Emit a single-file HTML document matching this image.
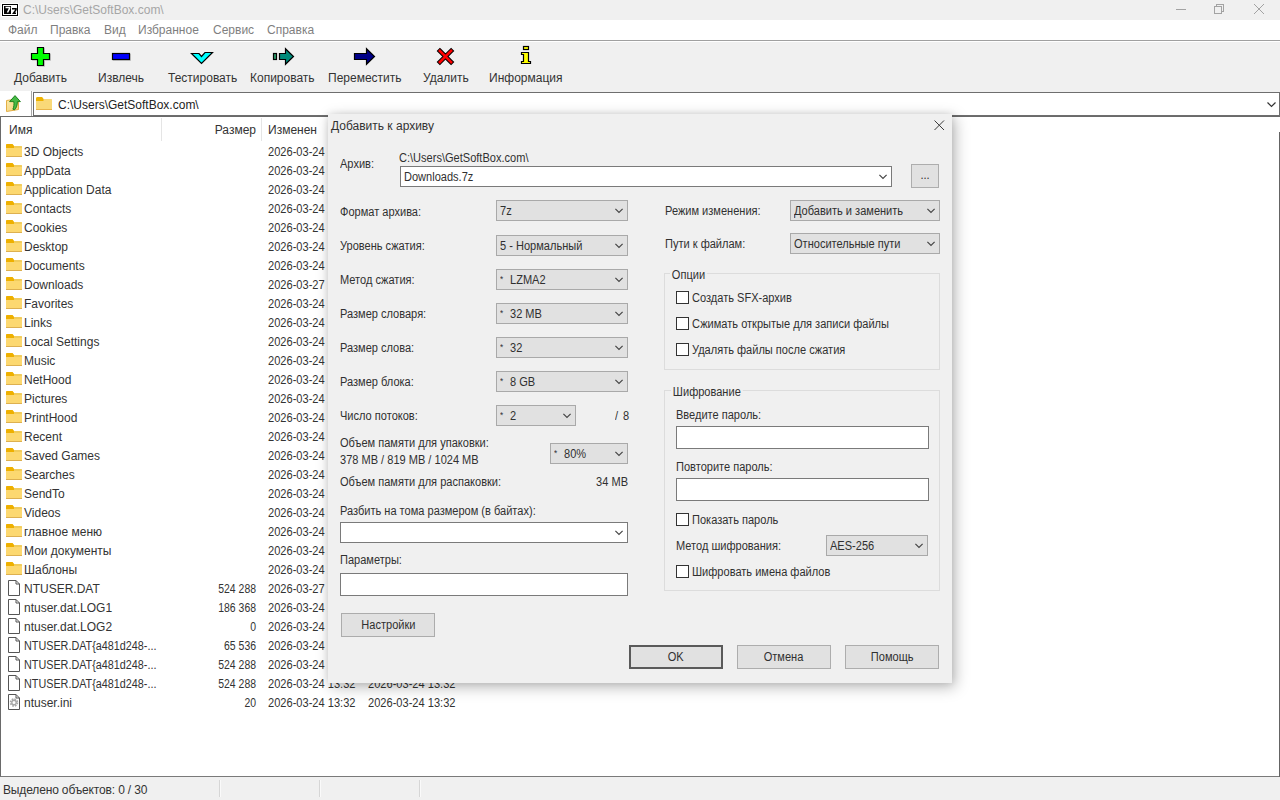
<!DOCTYPE html>
<html><head><meta charset="utf-8">
<style>
*{margin:0;padding:0;box-sizing:border-box}
html,body{width:1280px;height:800px;overflow:hidden;background:#f0f0f0;font-family:"Liberation Sans",sans-serif;font-size:12px;color:#333}
.a{position:absolute}
.t{position:absolute;white-space:nowrap;line-height:14px}
svg{position:absolute;overflow:visible}
.row{position:absolute;left:1px;width:1278px;height:19px}
.nm{position:absolute;left:23px;top:0;line-height:14px;white-space:nowrap}
.sz{position:absolute;left:0;width:255px;text-align:right;top:0;line-height:14px;white-space:nowrap;transform:scaleX(0.87);transform-origin:100% 0}
.d1{position:absolute;left:267px;top:0;line-height:14px;white-space:nowrap;transform:scaleX(0.923);transform-origin:0 0}
.d2{position:absolute;left:367px;top:0;line-height:14px;white-space:nowrap;transform:scaleX(0.923);transform-origin:0 0}
.cb{position:absolute;background:#e1e1e1;border:1px solid #a9a9a9;height:21px}
.cbw{position:absolute;background:#fff;border:1px solid #7a7a7a}
.btn{position:absolute;background:#e1e1e1;border:1px solid #adadad;text-align:center;line-height:22px;height:24px;width:94px;white-space:nowrap;font-size:12px;color:#303030}
.chk{position:absolute;width:13px;height:13px;border:1px solid #333;background:#fff}
.grp{position:absolute;border:1px solid #dcdcdc}
.s{position:absolute;white-space:nowrap;font-size:12px;line-height:14px;color:#303030;transform:scaleX(0.92);transform-origin:0 0}
.btn span{display:inline-block;transform:scaleX(0.92)}
</style></head><body>
<div class="a" style="left:0;top:0;width:1280px;height:20px;background:#f0f0f0"></div>
<div class="a" style="left:1px;top:3px;width:18px;height:14px;background:#fff"></div>
<div class="a" style="left:2px;top:4px;width:16px;height:12px;border:1px solid #000;background:#fff"></div>
<div class="a" style="left:4px;top:6px;width:7px;height:8px;background:#000"></div>
<svg style="left:4px;top:6px" width="7" height="8"><path d="M1.5 1.5H5.5V2.5L3.5 6.5" stroke="#fff" stroke-width="1.5" fill="none"/></svg>
<svg style="left:12px;top:8px" width="4" height="6"><path d="M0 0.7H4V1.8L1.5 5.2H4" stroke="#000" stroke-width="1.5" fill="none"/></svg>
<div class="t" style="left:23px;top:3px;color:#a6a6a6">C:\Users\GetSoftBox.com\</div>
<div class="a" style="left:1176px;top:9px;width:10px;height:1px;background:#a3a3a3"></div>
<div class="a" style="left:1216px;top:4px;width:8px;height:8px;border:1px solid #a3a3a3"></div>
<div class="a" style="left:1214px;top:6px;width:8px;height:8px;border:1px solid #a3a3a3;background:#f0f0f0"></div>
<svg style="left:1254px;top:4px" width="10" height="10"><path d="M0 0L10 10M10 0L0 10" stroke="#a3a3a3" stroke-width="1"/></svg>
<div class="a" style="left:0;top:20px;width:1280px;height:20px;background:#fff"></div>
<div class="t" style="left:8px;top:23px;color:#7f7f7f">Файл</div>
<div class="t" style="left:50px;top:23px;color:#7f7f7f">Правка</div>
<div class="t" style="left:104px;top:23px;color:#7f7f7f">Вид</div>
<div class="t" style="left:138px;top:23px;color:#7f7f7f">Избранное</div>
<div class="t" style="left:213px;top:23px;color:#7f7f7f">Сервис</div>
<div class="t" style="left:267px;top:23px;color:#7f7f7f">Справка</div>
<div class="a" style="left:0;top:40px;width:1280px;height:1px;background:#a0a0a0"></div>
<div class="a" style="left:0;top:41px;width:1280px;height:1px;background:#fff"></div>
<div class="t" style="left:14px;top:71px;color:#333">Добавить</div>
<div class="t" style="left:98px;top:71px;color:#333">Извлечь</div>
<div class="t" style="left:168px;top:71px;color:#333">Тестировать</div>
<div class="t" style="left:250px;top:71px;color:#333">Копировать</div>
<div class="t" style="left:328px;top:71px;color:#333">Переместить</div>
<div class="t" style="left:423px;top:71px;color:#333">Удалить</div>
<div class="t" style="left:489px;top:71px;color:#333">Информация</div>
<svg style="left:31px;top:47px" width="21" height="21"><path d="M7.5 1.5H13.5V7.5H19.5V13.5H13.5V19.5H7.5V13.5H1.5V7.5H7.5Z" fill="none" stroke="#9a9a9a" stroke-opacity="0.45"/><path d="M6.5 0.5H12.5V6.5H18.5V12.5H12.5V18.5H6.5V12.5H0.5V6.5H6.5Z" fill="#00ff00" stroke="#000" stroke-width="1.2"/></svg>
<svg style="left:112px;top:53px" width="20" height="9"><rect x="1.5" y="1.5" width="17" height="6" fill="none" stroke="#9a9a9a" stroke-opacity="0.45"/><rect x="0.5" y="0.5" width="17" height="6" fill="#0000ff" stroke="#000" stroke-width="1.2"/></svg>
<svg style="left:190px;top:51px" width="25" height="15"><path d="M1.5 2.5H9L11.5 5.5L15 1.5H22.5L11.5 12.5Z" fill="#00ffff" stroke="#000" stroke-width="1.2" stroke-linejoin="miter"/></svg>
<svg style="left:273px;top:48px" width="23" height="19"><rect x="0.5" y="5.5" width="3" height="6" fill="#2e9a6a" stroke="#000" stroke-width="1.2"/><path d="M6.5 5.5H12.5V0.7L20.5 8.5L12.5 16.3V11.5H6.5Z" fill="#008a7a" stroke="#000" stroke-width="1.2" stroke-linejoin="miter"/></svg>
<svg style="left:354px;top:48px" width="23" height="19"><path d="M0.5 5.5H12.5V0.7L20.5 8.5L12.5 16.3V11.5H0.5Z" fill="#000088" stroke="#000" stroke-width="1.2" stroke-linejoin="miter"/></svg>
<svg style="left:437px;top:48px" width="18" height="18"><path d="M2.9 2.9L14.1 14.1M14.1 2.9L2.9 14.1" stroke="#000" stroke-width="4.6" stroke-linecap="square"/><path d="M2.9 2.9L14.1 14.1M14.1 2.9L2.9 14.1" stroke="#ff0000" stroke-width="2.6" stroke-linecap="square"/></svg>
<svg style="left:520px;top:45px" width="13" height="21"><rect x="3.5" y="1.5" width="5" height="3" fill="#ffff00" stroke="#000" stroke-width="1.2"/><path d="M1.5 7.5H8.5V16.5H10.5V18.5H1.5V16.5H3.5V9.5H1.5Z" fill="#ffff00" stroke="#000" stroke-width="1.2" stroke-linejoin="miter"/></svg>
<div class="a" style="left:0;top:91px;width:31px;height:25px;background:#fff"></div>
<div class="a" style="left:31px;top:91px;width:1px;height:25px;background:#a8a8a8"></div>
<div class="a" style="left:32px;top:91px;width:1px;height:25px;background:#fff"></div>
<div class="a" style="left:33px;top:92px;width:1247px;height:24px;background:#fff;border:1px solid #6e6e6e"></div>
<svg style="left:5px;top:95px" width="17" height="18"><defs><linearGradient id="fg" x1="0" y1="0" x2="1" y2="1"><stop offset="0" stop-color="#fbe9a6"/><stop offset="1" stop-color="#f3d27a"/></linearGradient></defs><path d="M1.5 5.5L6.5 4.8L13.5 5.2V14.5L1.5 16.5Z" fill="url(#fg)" stroke="#e3ae45" stroke-width="1"/><path d="M4.6 6.6L10 0.6L15.4 6.6H12.4C12.3 10 11.5 12.8 9.6 14.8L7.9 14.2C8.9 11.8 9.2 9.2 8.8 6.6Z" fill="#46b946" stroke="#137a13" stroke-width="0.9" stroke-linejoin="round"/></svg>
<svg style="left:36px;top:97px" width="17" height="14"><path d="M0 1.5Q0 0 1.5 0H6L7.5 2H15.5Q16 2 16 3V12Q16 13 15 13H1Q0 13 0 12Z" fill="#f9d978"/><path d="M0 1.5Q0 0 1.5 0H6L7.5 2V4H0Z" fill="#eeb200"/><rect x="0" y="12" width="16" height="1" fill="#e8b449"/></svg>
<div class="t" style="left:58px;top:98px;color:#222">C:\Users\GetSoftBox.com\</div>
<svg style="left:1267px;top:102px" width="9" height="5"><path d="M0.5 0.5L4.5 4.5L8.5 0.5" stroke="#333" stroke-width="1.2" fill="none"/></svg>
<div class="a" style="left:0;top:116px;width:1280px;height:661px;background:#fff;border-left:1px solid #6a6a6a;border-top:1px solid #6a6a6a;border-bottom:1px solid #7a7a7a"></div>
<div class="a" style="left:1279px;top:132px;width:1px;height:645px;background:#646464"></div>
<div class="t" style="left:9px;top:123px">Имя</div>
<div class="t" style="left:0;width:256px;text-align:right;top:123px">Размер</div>
<div class="t" style="left:268px;top:123px">Изменен</div>
<div class="a" style="left:161px;top:118px;width:1px;height:23px;background:#e5e5e5"></div>
<div class="a" style="left:261px;top:118px;width:1px;height:23px;background:#e5e5e5"></div>
<div class="row" style="top:145px"><svg style="left:5px;top:-1px" width="16" height="13"><path d="M0 1Q0 0 1 0H6.5L8 2H15Q16 2 16 3V12Q16 13 15 13H1Q0 13 0 12Z" fill="#fcd870"/><path d="M8 2H15Q16 2 16 3V4H8Z" fill="#f1cc5c"/><path d="M0 1Q0 0 1 0H6.5L8 2V4H0Z" fill="#eeb000"/><rect x="0" y="12" width="16" height="1" fill="#ddb050"/></svg><div class="nm">3D Objects</div><div class="sz"></div><div class="d1">2026-03-24 13:32</div><div class="d2">2026-03-24 13:32</div></div>
<div class="row" style="top:164px"><svg style="left:5px;top:-1px" width="16" height="13"><path d="M0 1Q0 0 1 0H6.5L8 2H15Q16 2 16 3V12Q16 13 15 13H1Q0 13 0 12Z" fill="#fcd870"/><path d="M8 2H15Q16 2 16 3V4H8Z" fill="#f1cc5c"/><path d="M0 1Q0 0 1 0H6.5L8 2V4H0Z" fill="#eeb000"/><rect x="0" y="12" width="16" height="1" fill="#ddb050"/></svg><div class="nm">AppData</div><div class="sz"></div><div class="d1">2026-03-24 13:32</div><div class="d2">2026-03-24 13:32</div></div>
<div class="row" style="top:183px"><svg style="left:5px;top:-1px" width="16" height="13"><path d="M0 1Q0 0 1 0H6.5L8 2H15Q16 2 16 3V12Q16 13 15 13H1Q0 13 0 12Z" fill="#fcd870"/><path d="M8 2H15Q16 2 16 3V4H8Z" fill="#f1cc5c"/><path d="M0 1Q0 0 1 0H6.5L8 2V4H0Z" fill="#eeb000"/><rect x="0" y="12" width="16" height="1" fill="#ddb050"/></svg><div class="nm">Application Data</div><div class="sz"></div><div class="d1">2026-03-24 13:32</div><div class="d2">2026-03-24 13:32</div></div>
<div class="row" style="top:202px"><svg style="left:5px;top:-1px" width="16" height="13"><path d="M0 1Q0 0 1 0H6.5L8 2H15Q16 2 16 3V12Q16 13 15 13H1Q0 13 0 12Z" fill="#fcd870"/><path d="M8 2H15Q16 2 16 3V4H8Z" fill="#f1cc5c"/><path d="M0 1Q0 0 1 0H6.5L8 2V4H0Z" fill="#eeb000"/><rect x="0" y="12" width="16" height="1" fill="#ddb050"/></svg><div class="nm">Contacts</div><div class="sz"></div><div class="d1">2026-03-24 13:32</div><div class="d2">2026-03-24 13:32</div></div>
<div class="row" style="top:221px"><svg style="left:5px;top:-1px" width="16" height="13"><path d="M0 1Q0 0 1 0H6.5L8 2H15Q16 2 16 3V12Q16 13 15 13H1Q0 13 0 12Z" fill="#fcd870"/><path d="M8 2H15Q16 2 16 3V4H8Z" fill="#f1cc5c"/><path d="M0 1Q0 0 1 0H6.5L8 2V4H0Z" fill="#eeb000"/><rect x="0" y="12" width="16" height="1" fill="#ddb050"/></svg><div class="nm">Cookies</div><div class="sz"></div><div class="d1">2026-03-24 13:32</div><div class="d2">2026-03-24 13:32</div></div>
<div class="row" style="top:240px"><svg style="left:5px;top:-1px" width="16" height="13"><path d="M0 1Q0 0 1 0H6.5L8 2H15Q16 2 16 3V12Q16 13 15 13H1Q0 13 0 12Z" fill="#fcd870"/><path d="M8 2H15Q16 2 16 3V4H8Z" fill="#f1cc5c"/><path d="M0 1Q0 0 1 0H6.5L8 2V4H0Z" fill="#eeb000"/><rect x="0" y="12" width="16" height="1" fill="#ddb050"/></svg><div class="nm">Desktop</div><div class="sz"></div><div class="d1">2026-03-24 13:32</div><div class="d2">2026-03-24 13:32</div></div>
<div class="row" style="top:259px"><svg style="left:5px;top:-1px" width="16" height="13"><path d="M0 1Q0 0 1 0H6.5L8 2H15Q16 2 16 3V12Q16 13 15 13H1Q0 13 0 12Z" fill="#fcd870"/><path d="M8 2H15Q16 2 16 3V4H8Z" fill="#f1cc5c"/><path d="M0 1Q0 0 1 0H6.5L8 2V4H0Z" fill="#eeb000"/><rect x="0" y="12" width="16" height="1" fill="#ddb050"/></svg><div class="nm">Documents</div><div class="sz"></div><div class="d1">2026-03-24 13:32</div><div class="d2">2026-03-24 13:32</div></div>
<div class="row" style="top:278px"><svg style="left:5px;top:-1px" width="16" height="13"><path d="M0 1Q0 0 1 0H6.5L8 2H15Q16 2 16 3V12Q16 13 15 13H1Q0 13 0 12Z" fill="#fcd870"/><path d="M8 2H15Q16 2 16 3V4H8Z" fill="#f1cc5c"/><path d="M0 1Q0 0 1 0H6.5L8 2V4H0Z" fill="#eeb000"/><rect x="0" y="12" width="16" height="1" fill="#ddb050"/></svg><div class="nm">Downloads</div><div class="sz"></div><div class="d1">2026-03-27 13:32</div><div class="d2">2026-03-24 13:32</div></div>
<div class="row" style="top:297px"><svg style="left:5px;top:-1px" width="16" height="13"><path d="M0 1Q0 0 1 0H6.5L8 2H15Q16 2 16 3V12Q16 13 15 13H1Q0 13 0 12Z" fill="#fcd870"/><path d="M8 2H15Q16 2 16 3V4H8Z" fill="#f1cc5c"/><path d="M0 1Q0 0 1 0H6.5L8 2V4H0Z" fill="#eeb000"/><rect x="0" y="12" width="16" height="1" fill="#ddb050"/></svg><div class="nm">Favorites</div><div class="sz"></div><div class="d1">2026-03-24 13:32</div><div class="d2">2026-03-24 13:32</div></div>
<div class="row" style="top:316px"><svg style="left:5px;top:-1px" width="16" height="13"><path d="M0 1Q0 0 1 0H6.5L8 2H15Q16 2 16 3V12Q16 13 15 13H1Q0 13 0 12Z" fill="#fcd870"/><path d="M8 2H15Q16 2 16 3V4H8Z" fill="#f1cc5c"/><path d="M0 1Q0 0 1 0H6.5L8 2V4H0Z" fill="#eeb000"/><rect x="0" y="12" width="16" height="1" fill="#ddb050"/></svg><div class="nm">Links</div><div class="sz"></div><div class="d1">2026-03-24 13:32</div><div class="d2">2026-03-24 13:32</div></div>
<div class="row" style="top:335px"><svg style="left:5px;top:-1px" width="16" height="13"><path d="M0 1Q0 0 1 0H6.5L8 2H15Q16 2 16 3V12Q16 13 15 13H1Q0 13 0 12Z" fill="#fcd870"/><path d="M8 2H15Q16 2 16 3V4H8Z" fill="#f1cc5c"/><path d="M0 1Q0 0 1 0H6.5L8 2V4H0Z" fill="#eeb000"/><rect x="0" y="12" width="16" height="1" fill="#ddb050"/></svg><div class="nm">Local Settings</div><div class="sz"></div><div class="d1">2026-03-24 13:32</div><div class="d2">2026-03-24 13:32</div></div>
<div class="row" style="top:354px"><svg style="left:5px;top:-1px" width="16" height="13"><path d="M0 1Q0 0 1 0H6.5L8 2H15Q16 2 16 3V12Q16 13 15 13H1Q0 13 0 12Z" fill="#fcd870"/><path d="M8 2H15Q16 2 16 3V4H8Z" fill="#f1cc5c"/><path d="M0 1Q0 0 1 0H6.5L8 2V4H0Z" fill="#eeb000"/><rect x="0" y="12" width="16" height="1" fill="#ddb050"/></svg><div class="nm">Music</div><div class="sz"></div><div class="d1">2026-03-24 13:32</div><div class="d2">2026-03-24 13:32</div></div>
<div class="row" style="top:373px"><svg style="left:5px;top:-1px" width="16" height="13"><path d="M0 1Q0 0 1 0H6.5L8 2H15Q16 2 16 3V12Q16 13 15 13H1Q0 13 0 12Z" fill="#fcd870"/><path d="M8 2H15Q16 2 16 3V4H8Z" fill="#f1cc5c"/><path d="M0 1Q0 0 1 0H6.5L8 2V4H0Z" fill="#eeb000"/><rect x="0" y="12" width="16" height="1" fill="#ddb050"/></svg><div class="nm">NetHood</div><div class="sz"></div><div class="d1">2026-03-24 13:32</div><div class="d2">2026-03-24 13:32</div></div>
<div class="row" style="top:392px"><svg style="left:5px;top:-1px" width="16" height="13"><path d="M0 1Q0 0 1 0H6.5L8 2H15Q16 2 16 3V12Q16 13 15 13H1Q0 13 0 12Z" fill="#fcd870"/><path d="M8 2H15Q16 2 16 3V4H8Z" fill="#f1cc5c"/><path d="M0 1Q0 0 1 0H6.5L8 2V4H0Z" fill="#eeb000"/><rect x="0" y="12" width="16" height="1" fill="#ddb050"/></svg><div class="nm">Pictures</div><div class="sz"></div><div class="d1">2026-03-24 13:32</div><div class="d2">2026-03-24 13:32</div></div>
<div class="row" style="top:411px"><svg style="left:5px;top:-1px" width="16" height="13"><path d="M0 1Q0 0 1 0H6.5L8 2H15Q16 2 16 3V12Q16 13 15 13H1Q0 13 0 12Z" fill="#fcd870"/><path d="M8 2H15Q16 2 16 3V4H8Z" fill="#f1cc5c"/><path d="M0 1Q0 0 1 0H6.5L8 2V4H0Z" fill="#eeb000"/><rect x="0" y="12" width="16" height="1" fill="#ddb050"/></svg><div class="nm">PrintHood</div><div class="sz"></div><div class="d1">2026-03-24 13:32</div><div class="d2">2026-03-24 13:32</div></div>
<div class="row" style="top:430px"><svg style="left:5px;top:-1px" width="16" height="13"><path d="M0 1Q0 0 1 0H6.5L8 2H15Q16 2 16 3V12Q16 13 15 13H1Q0 13 0 12Z" fill="#fcd870"/><path d="M8 2H15Q16 2 16 3V4H8Z" fill="#f1cc5c"/><path d="M0 1Q0 0 1 0H6.5L8 2V4H0Z" fill="#eeb000"/><rect x="0" y="12" width="16" height="1" fill="#ddb050"/></svg><div class="nm">Recent</div><div class="sz"></div><div class="d1">2026-03-24 13:32</div><div class="d2">2026-03-24 13:32</div></div>
<div class="row" style="top:449px"><svg style="left:5px;top:-1px" width="16" height="13"><path d="M0 1Q0 0 1 0H6.5L8 2H15Q16 2 16 3V12Q16 13 15 13H1Q0 13 0 12Z" fill="#fcd870"/><path d="M8 2H15Q16 2 16 3V4H8Z" fill="#f1cc5c"/><path d="M0 1Q0 0 1 0H6.5L8 2V4H0Z" fill="#eeb000"/><rect x="0" y="12" width="16" height="1" fill="#ddb050"/></svg><div class="nm">Saved Games</div><div class="sz"></div><div class="d1">2026-03-24 13:32</div><div class="d2">2026-03-24 13:32</div></div>
<div class="row" style="top:468px"><svg style="left:5px;top:-1px" width="16" height="13"><path d="M0 1Q0 0 1 0H6.5L8 2H15Q16 2 16 3V12Q16 13 15 13H1Q0 13 0 12Z" fill="#fcd870"/><path d="M8 2H15Q16 2 16 3V4H8Z" fill="#f1cc5c"/><path d="M0 1Q0 0 1 0H6.5L8 2V4H0Z" fill="#eeb000"/><rect x="0" y="12" width="16" height="1" fill="#ddb050"/></svg><div class="nm">Searches</div><div class="sz"></div><div class="d1">2026-03-24 13:32</div><div class="d2">2026-03-24 13:32</div></div>
<div class="row" style="top:487px"><svg style="left:5px;top:-1px" width="16" height="13"><path d="M0 1Q0 0 1 0H6.5L8 2H15Q16 2 16 3V12Q16 13 15 13H1Q0 13 0 12Z" fill="#fcd870"/><path d="M8 2H15Q16 2 16 3V4H8Z" fill="#f1cc5c"/><path d="M0 1Q0 0 1 0H6.5L8 2V4H0Z" fill="#eeb000"/><rect x="0" y="12" width="16" height="1" fill="#ddb050"/></svg><div class="nm">SendTo</div><div class="sz"></div><div class="d1">2026-03-24 13:32</div><div class="d2">2026-03-24 13:32</div></div>
<div class="row" style="top:506px"><svg style="left:5px;top:-1px" width="16" height="13"><path d="M0 1Q0 0 1 0H6.5L8 2H15Q16 2 16 3V12Q16 13 15 13H1Q0 13 0 12Z" fill="#fcd870"/><path d="M8 2H15Q16 2 16 3V4H8Z" fill="#f1cc5c"/><path d="M0 1Q0 0 1 0H6.5L8 2V4H0Z" fill="#eeb000"/><rect x="0" y="12" width="16" height="1" fill="#ddb050"/></svg><div class="nm">Videos</div><div class="sz"></div><div class="d1">2026-03-24 13:32</div><div class="d2">2026-03-24 13:32</div></div>
<div class="row" style="top:525px"><svg style="left:5px;top:-1px" width="16" height="13"><path d="M0 1Q0 0 1 0H6.5L8 2H15Q16 2 16 3V12Q16 13 15 13H1Q0 13 0 12Z" fill="#fcd870"/><path d="M8 2H15Q16 2 16 3V4H8Z" fill="#f1cc5c"/><path d="M0 1Q0 0 1 0H6.5L8 2V4H0Z" fill="#eeb000"/><rect x="0" y="12" width="16" height="1" fill="#ddb050"/></svg><div class="nm">главное меню</div><div class="sz"></div><div class="d1">2026-03-24 13:32</div><div class="d2">2026-03-24 13:32</div></div>
<div class="row" style="top:544px"><svg style="left:5px;top:-1px" width="16" height="13"><path d="M0 1Q0 0 1 0H6.5L8 2H15Q16 2 16 3V12Q16 13 15 13H1Q0 13 0 12Z" fill="#fcd870"/><path d="M8 2H15Q16 2 16 3V4H8Z" fill="#f1cc5c"/><path d="M0 1Q0 0 1 0H6.5L8 2V4H0Z" fill="#eeb000"/><rect x="0" y="12" width="16" height="1" fill="#ddb050"/></svg><div class="nm">Мои документы</div><div class="sz"></div><div class="d1">2026-03-24 13:32</div><div class="d2">2026-03-24 13:32</div></div>
<div class="row" style="top:563px"><svg style="left:5px;top:-1px" width="16" height="13"><path d="M0 1Q0 0 1 0H6.5L8 2H15Q16 2 16 3V12Q16 13 15 13H1Q0 13 0 12Z" fill="#fcd870"/><path d="M8 2H15Q16 2 16 3V4H8Z" fill="#f1cc5c"/><path d="M0 1Q0 0 1 0H6.5L8 2V4H0Z" fill="#eeb000"/><rect x="0" y="12" width="16" height="1" fill="#ddb050"/></svg><div class="nm">Шаблоны</div><div class="sz"></div><div class="d1">2026-03-24 13:32</div><div class="d2">2026-03-24 13:32</div></div>
<div class="row" style="top:582px"><svg style="left:7px;top:-2px" width="12" height="16"><path d="M0.5 0.5H8L11.5 4V15.5H0.5Z" fill="#fff" stroke="#555" stroke-width="1"/><path d="M8 0.5V4H11.5" fill="none" stroke="#555" stroke-width="1"/></svg><div class="nm">NTUSER.DAT</div><div class="sz">524 288</div><div class="d1">2026-03-27 13:32</div><div class="d2">2026-03-24 13:32</div></div>
<div class="row" style="top:601px"><svg style="left:7px;top:-2px" width="12" height="16"><path d="M0.5 0.5H8L11.5 4V15.5H0.5Z" fill="#fff" stroke="#555" stroke-width="1"/><path d="M8 0.5V4H11.5" fill="none" stroke="#555" stroke-width="1"/></svg><div class="nm">ntuser.dat.LOG1</div><div class="sz">186 368</div><div class="d1">2026-03-24 13:32</div><div class="d2">2026-03-24 13:32</div></div>
<div class="row" style="top:620px"><svg style="left:7px;top:-2px" width="12" height="16"><path d="M0.5 0.5H8L11.5 4V15.5H0.5Z" fill="#fff" stroke="#555" stroke-width="1"/><path d="M8 0.5V4H11.5" fill="none" stroke="#555" stroke-width="1"/></svg><div class="nm">ntuser.dat.LOG2</div><div class="sz">0</div><div class="d1">2026-03-24 13:32</div><div class="d2">2026-03-24 13:32</div></div>
<div class="row" style="top:639px"><svg style="left:7px;top:-2px" width="12" height="16"><path d="M0.5 0.5H8L11.5 4V15.5H0.5Z" fill="#fff" stroke="#555" stroke-width="1"/><path d="M8 0.5V4H11.5" fill="none" stroke="#555" stroke-width="1"/></svg><div class="nm" style="transform:scaleX(0.9);transform-origin:0 0">NTUSER.DAT{a481d248-...</div><div class="sz">65 536</div><div class="d1">2026-03-24 13:32</div><div class="d2">2026-03-24 13:32</div></div>
<div class="row" style="top:658px"><svg style="left:7px;top:-2px" width="12" height="16"><path d="M0.5 0.5H8L11.5 4V15.5H0.5Z" fill="#fff" stroke="#555" stroke-width="1"/><path d="M8 0.5V4H11.5" fill="none" stroke="#555" stroke-width="1"/></svg><div class="nm" style="transform:scaleX(0.9);transform-origin:0 0">NTUSER.DAT{a481d248-...</div><div class="sz">524 288</div><div class="d1">2026-03-24 13:32</div><div class="d2">2026-03-24 13:32</div></div>
<div class="row" style="top:677px"><svg style="left:7px;top:-2px" width="12" height="16"><path d="M0.5 0.5H8L11.5 4V15.5H0.5Z" fill="#fff" stroke="#555" stroke-width="1"/><path d="M8 0.5V4H11.5" fill="none" stroke="#555" stroke-width="1"/></svg><div class="nm" style="transform:scaleX(0.9);transform-origin:0 0">NTUSER.DAT{a481d248-...</div><div class="sz">524 288</div><div class="d1">2026-03-24 13:32</div><div class="d2">2026-03-24 13:32</div></div>
<div class="row" style="top:696px"><svg style="left:7px;top:-2px" width="12" height="16"><path d="M0.5 0.5H8L11.5 4V15.5H0.5Z" fill="#fff" stroke="#555" stroke-width="1"/><path d="M8 0.5V4H11.5" fill="none" stroke="#555" stroke-width="1"/><circle cx="6" cy="8.5" r="3.4" fill="none" stroke="#a8a8a8" stroke-width="1.8" stroke-dasharray="1.6 1.07"/><circle cx="6" cy="8.5" r="2.2" fill="none" stroke="#a8a8a8" stroke-width="1.4"/></svg><div class="nm">ntuser.ini</div><div class="sz">20</div><div class="d1">2026-03-24 13:32</div><div class="d2">2026-03-24 13:32</div></div>
<div class="t" style="left:3px;top:783px;letter-spacing:-0.15px">Выделено объектов: 0 / 30</div>
<div class="a" style="left:219px;top:780px;width:1px;height:17px;background:#d6d6d6"></div>
<div class="a" style="left:220px;top:780px;width:1px;height:17px;background:#fafafa"></div>
<div class="a" style="left:319px;top:780px;width:1px;height:17px;background:#d6d6d6"></div>
<div class="a" style="left:320px;top:780px;width:1px;height:17px;background:#fafafa"></div>
<div class="a" style="left:419px;top:780px;width:1px;height:17px;background:#d6d6d6"></div>
<div class="a" style="left:420px;top:780px;width:1px;height:17px;background:#fafafa"></div>
<div class="a" style="left:328px;top:114px;width:624px;height:569px;background:#f0f0f0;box-shadow:3px 4px 14px rgba(0,0,0,0.28),0 0 7px rgba(0,0,0,0.10)"></div>
<div class="t" style="left:331px;top:119px;color:#333">Добавить к архиву</div>
<svg style="left:934px;top:120px" width="11" height="11"><path d="M0.5 0.5L10 10M10 0.5L0.5 10" stroke="#3a3a3a" stroke-width="1"/></svg>
<div class="s" style="left:340px;top:157px;">Архив:</div>
<div class="s" style="left:399px;top:151px;">C:\Users\GetSoftBox.com\</div>
<div class="cbw" style="left:400px;top:166px;width:492px;height:21px"></div>
<div class="s" style="left:404px;top:170px">Downloads.7z</div>
<svg style="left:879px;top:174px" width="8" height="5"><path d="M0.4 0.8L4 4.4L7.6 0.8" stroke="#444" stroke-width="1.15" fill="none"/></svg>
<div class="btn" style="left:911px;top:164px;width:28px;height:24px;line-height:20px;border-color:#adadad"><span>...</span></div>
<div class="cb" style="left:496px;top:200px;width:132px;height:21px"></div>
<div class="s" style="left:500px;top:204px">7z</div>
<svg style="left:615px;top:208px" width="8" height="5"><path d="M0.4 0.8L4 4.4L7.6 0.8" stroke="#444" stroke-width="1.15" fill="none"/></svg>
<div class="s" style="left:340px;top:205px;">Формат архива:</div>
<div class="cb" style="left:496px;top:235px;width:132px;height:21px"></div>
<div class="s" style="left:500px;top:239px">5 - Нормальный</div>
<svg style="left:615px;top:243px" width="8" height="5"><path d="M0.4 0.8L4 4.4L7.6 0.8" stroke="#444" stroke-width="1.15" fill="none"/></svg>
<div class="s" style="left:340px;top:239px;">Уровень сжатия:</div>
<div class="cb" style="left:496px;top:269px;width:132px;height:21px"></div>
<div class="s" style="left:500px;top:272px;font-size:9px">*</div>
<div class="s" style="left:510px;top:273px">LZMA2</div>
<svg style="left:615px;top:277px" width="8" height="5"><path d="M0.4 0.8L4 4.4L7.6 0.8" stroke="#444" stroke-width="1.15" fill="none"/></svg>
<div class="s" style="left:340px;top:273px;">Метод сжатия:</div>
<div class="cb" style="left:496px;top:303px;width:132px;height:21px"></div>
<div class="s" style="left:500px;top:306px;font-size:9px">*</div>
<div class="s" style="left:510px;top:307px">32 MB</div>
<svg style="left:615px;top:311px" width="8" height="5"><path d="M0.4 0.8L4 4.4L7.6 0.8" stroke="#444" stroke-width="1.15" fill="none"/></svg>
<div class="s" style="left:340px;top:307px;">Размер словаря:</div>
<div class="cb" style="left:496px;top:337px;width:132px;height:21px"></div>
<div class="s" style="left:500px;top:340px;font-size:9px">*</div>
<div class="s" style="left:510px;top:341px">32</div>
<svg style="left:615px;top:345px" width="8" height="5"><path d="M0.4 0.8L4 4.4L7.6 0.8" stroke="#444" stroke-width="1.15" fill="none"/></svg>
<div class="s" style="left:340px;top:341px;">Размер слова:</div>
<div class="cb" style="left:496px;top:371px;width:132px;height:21px"></div>
<div class="s" style="left:500px;top:374px;font-size:9px">*</div>
<div class="s" style="left:510px;top:375px">8 GB</div>
<svg style="left:615px;top:379px" width="8" height="5"><path d="M0.4 0.8L4 4.4L7.6 0.8" stroke="#444" stroke-width="1.15" fill="none"/></svg>
<div class="s" style="left:340px;top:375px;">Размер блока:</div>
<div class="cb" style="left:496px;top:405px;width:80px;height:21px"></div>
<div class="s" style="left:500px;top:408px;font-size:9px">*</div>
<div class="s" style="left:510px;top:409px">2</div>
<svg style="left:563px;top:413px" width="8" height="5"><path d="M0.4 0.8L4 4.4L7.6 0.8" stroke="#444" stroke-width="1.15" fill="none"/></svg>
<div class="s" style="left:340px;top:409px;">Число потоков:</div>
<div class="s" style="left:615px;top:409px;word-spacing:2px">/ 8</div>
<div class="s" style="left:340px;top:436px;">Объем памяти для упаковки:</div>
<div class="s" style="left:340px;top:453px;">378 MB / 819 MB / 1024 MB</div>
<div class="cb" style="left:550px;top:443px;width:78px;height:21px"></div>
<div class="s" style="left:554px;top:446px;font-size:9px">*</div>
<div class="s" style="left:564px;top:447px">80%</div>
<svg style="left:615px;top:451px" width="8" height="5"><path d="M0.4 0.8L4 4.4L7.6 0.8" stroke="#444" stroke-width="1.15" fill="none"/></svg>
<div class="s" style="left:340px;top:475px;">Объем памяти для распаковки:</div>
<div class="s" style="left:500px;width:128px;text-align:right;top:475px;transform-origin:100% 0">34 MB</div>
<div class="s" style="left:340px;top:504px;">Разбить на тома размером (в байтах):</div>
<div class="cbw" style="left:340px;top:522px;width:288px;height:21px"></div>
<svg style="left:615px;top:530px" width="8" height="5"><path d="M0.4 0.8L4 4.4L7.6 0.8" stroke="#444" stroke-width="1.15" fill="none"/></svg>
<div class="s" style="left:340px;top:553px;">Параметры:</div>
<div class="cbw" style="left:340px;top:573px;width:288px;height:23px"></div>
<div class="btn" style="left:341px;top:613px;width:94px;height:24px;line-height:22px;border-color:#acacac"><span>Настройки</span></div>
<div class="cb" style="left:790px;top:200px;width:150px;height:21px"></div>
<div class="s" style="left:794px;top:204px">Добавить и заменить</div>
<svg style="left:927px;top:208px" width="8" height="5"><path d="M0.4 0.8L4 4.4L7.6 0.8" stroke="#444" stroke-width="1.15" fill="none"/></svg>
<div class="s" style="left:665px;top:204px;">Режим изменения:</div>
<div class="cb" style="left:790px;top:233px;width:150px;height:21px"></div>
<div class="s" style="left:794px;top:237px">Относительные пути</div>
<svg style="left:927px;top:241px" width="8" height="5"><path d="M0.4 0.8L4 4.4L7.6 0.8" stroke="#444" stroke-width="1.15" fill="none"/></svg>
<div class="s" style="left:665px;top:237px;">Пути к файлам:</div>
<div class="grp" style="left:664px;top:273px;width:276px;height:97px"></div>
<div class="s" style="left:670px;top:268px;padding:0 2px;background:#f0f0f0">Опции</div>
<div class="chk" style="left:676px;top:291px"></div>
<div class="s" style="left:692px;top:291px;">Создать SFX-архив</div>
<div class="chk" style="left:676px;top:317px"></div>
<div class="s" style="left:692px;top:317px;">Сжимать открытые для записи файлы</div>
<div class="chk" style="left:676px;top:343px"></div>
<div class="s" style="left:692px;top:343px;">Удалять файлы после сжатия</div>
<div class="grp" style="left:664px;top:390px;width:276px;height:201px"></div>
<div class="s" style="left:671px;top:385px;padding:0 2px;background:#f0f0f0">Шифрование</div>
<div class="s" style="left:676px;top:408px;">Введите пароль:</div>
<div class="cbw" style="left:676px;top:426px;width:253px;height:23px"></div>
<div class="s" style="left:676px;top:460px;">Повторите пароль:</div>
<div class="cbw" style="left:676px;top:478px;width:253px;height:23px"></div>
<div class="chk" style="left:676px;top:513px"></div>
<div class="s" style="left:692px;top:513px;">Показать пароль</div>
<div class="cb" style="left:826px;top:535px;width:102px;height:21px"></div>
<div class="s" style="left:830px;top:539px">AES-256</div>
<svg style="left:915px;top:543px" width="8" height="5"><path d="M0.4 0.8L4 4.4L7.6 0.8" stroke="#444" stroke-width="1.15" fill="none"/></svg>
<div class="s" style="left:676px;top:539px;">Метод шифрования:</div>
<div class="chk" style="left:676px;top:565px"></div>
<div class="s" style="left:692px;top:565px;">Шифровать имена файлов</div>
<div class="btn" style="left:629px;top:645px;border:2px solid #5a5a5a;line-height:20px"><span>OK</span></div>
<div class="btn" style="left:737px;top:645px"><span>Отмена</span></div>
<div class="btn" style="left:845px;top:645px"><span>Помощь</span></div>
</body></html>
